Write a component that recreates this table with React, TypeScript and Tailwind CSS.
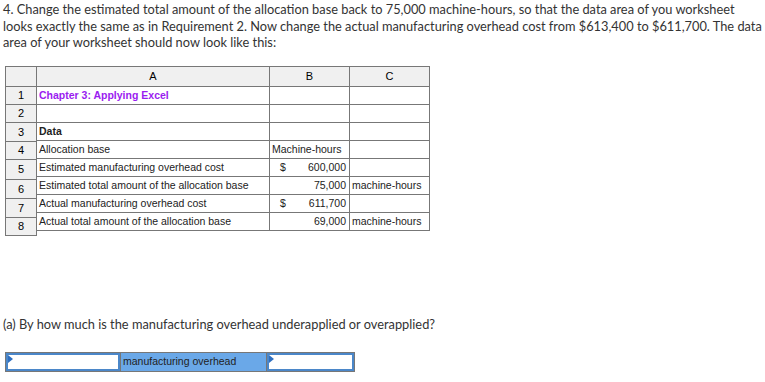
import React from 'react';

const rowHeights = [18, 18, 19, 18, 20, 19, 19, 18];

interface Row {
    a: string;
    b?: string;
    dollar?: boolean;
    c?: string;
    bold?: boolean;
    title?: boolean;
    bLeft?: boolean;
}

const rows: Row[] = [
    { a: 'Chapter 3: Applying Excel', title: true },
    { a: '' },
    { a: 'Data', bold: true },
    { a: 'Allocation base', b: 'Machine-hours', bLeft: true },
    { a: 'Estimated manufacturing overhead cost', b: '600,000', dollar: true },
    { a: 'Estimated total amount of the allocation base', b: '75,000', c: 'machine-hours' },
    { a: 'Actual manufacturing overhead cost', b: '611,700', dollar: true },
    { a: 'Actual total amount of the allocation base', b: '69,000', c: 'machine-hours' },
];

export default function App() {
    return (
        <div className="w-[765px] h-[382px] bg-white overflow-hidden text-[#333]" style={{ fontFamily: 'Lato, "Open Sans", sans-serif' }}>
            <p className="px-[3px] pt-[1px] text-[12.8px] leading-[16.5px] whitespace-nowrap">
                4. Change the estimated total amount of the allocation base back to 75,000 machine-hours, so that the data area of you worksheet
                <br />
                looks exactly the same as in Requirement 2. Now change the actual manufacturing overhead cost from $613,400 to $611,700. The data
                <br />
                area of your worksheet should now look like this:
            </p>

            <div className="flex ml-[5px] mt-[15px] text-[10.5px] text-[#222]" style={{ fontFamily: '"Liberation Sans", Arial, sans-serif' }}>
                {/* row numbers */}
                <div className="flex flex-col w-[32px]">
                    <div className="h-[21px] bg-[#f0f0f0] border border-[#777]" />
                    {rowHeights.map((h, i) => (
                        <div
                            key={i}
                            className="bg-[#f0f0f0] border-x border-b border-[#777] flex items-center justify-center pt-[1px] text-[11px] text-black"
                            style={{ height: h }}
                        >
                            {i + 1}
                        </div>
                    ))}
                </div>

                {/* data area */}
                <div className="flex flex-col">
                    <div className="flex h-[21px] bg-[#f0f0f0] border-y border-r border-[#777] text-[11px] text-black">
                        <div className="w-[233px] border-r border-[#777] flex items-center justify-center pt-[1px]">A</div>
                        <div className="w-[80px] border-r border-[#777] flex items-center justify-center pt-[1px]">B</div>
                        <div className="w-[79px] flex items-center justify-center pt-[1px]">C</div>
                    </div>
                    {rows.map((r, i) => (
                        <div key={i} className="flex h-[18px] border-b border-r border-[#777]">
                            <div
                                className={`w-[233px] border-r border-[#777] flex items-center pl-[2px] pt-[1px] ${r.title ? 'font-bold text-[#9a1cf0]' : ''} ${r.bold ? 'font-bold' : ''}`}
                            >
                                {r.a}
                            </div>
                            <div className={`w-[80px] border-r border-[#777] flex items-center pr-[3px] pt-[1px] ${r.bLeft ? 'pl-[2px]' : r.dollar ? 'justify-between pl-[10px]' : 'justify-end'}`}>
                                {r.dollar && <span>$</span>}
                                {r.b && <span>{r.b}</span>}
                            </div>
                            <div className="w-[79px] flex items-center pl-[2px] pt-[1px]">{r.c}</div>
                        </div>
                    ))}
                </div>
            </div>

            <p className="px-[3px] mt-[80px] text-[12.8px] leading-[16px]">
                (a) By how much is the manufacturing overhead underapplied or overapplied?
            </p>

            <div className="flex ml-[5px] mt-[20px] h-[20px] border border-[#777] w-[350px]">
                <div className="relative w-[114px] border-2 border-[#4b87c9] bg-white">
                    <span className="absolute left-0 top-0 w-0 h-0 border-t-[4px] border-t-transparent border-b-[4px] border-b-transparent border-l-[5px] border-l-[#2f6fc0]" />
                </div>
                <div className="w-[147px] bg-[#6aa8e8] border-x border-[#777] flex items-center pl-[2px] text-[10.5px] text-[#222]" style={{ fontFamily: '"Liberation Sans", Arial, sans-serif' }}>
                    manufacturing overhead
                </div>
                <div className="relative flex-1 border-2 border-[#4b87c9] bg-white">
                    <span className="absolute left-0 top-0 w-0 h-0 border-t-[4px] border-t-transparent border-b-[4px] border-b-transparent border-l-[5px] border-l-[#2f6fc0]" />
                </div>
            </div>
        </div>
    );
}
